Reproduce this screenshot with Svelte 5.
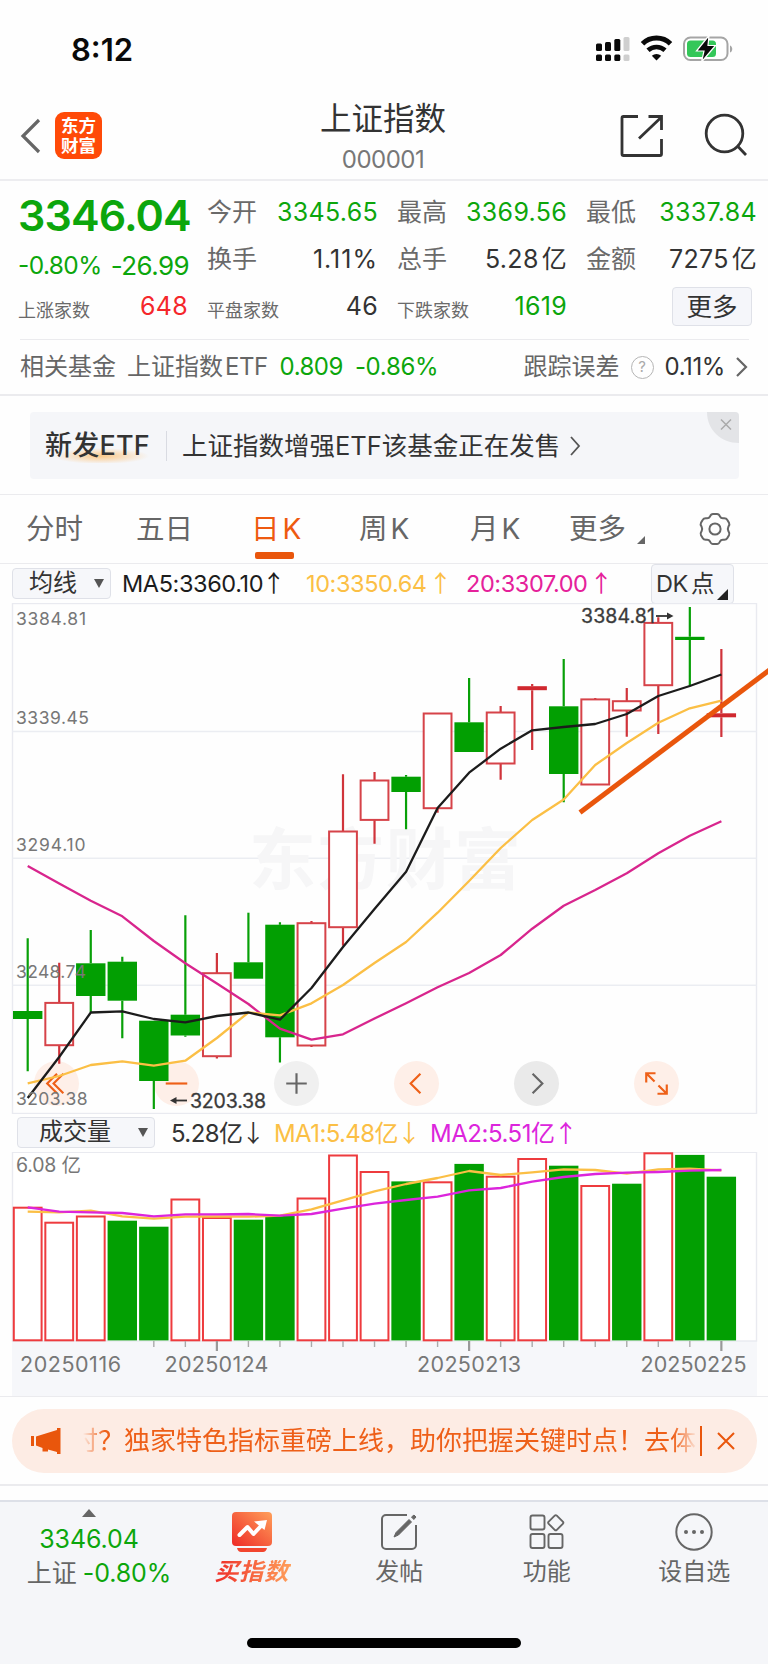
<script>
  const left = 27.7;
  const step = 31.53;
  const barWidth = 29.4;

  // up / down, high, body top, body bottom, low
  const candles = [
    ["down", 938.3, 1011, 1019, 1071.3],
    ["up", 962.7, 1002.7, 1045, 1063.7],
    ["down", 930, 963.3, 996, 1012],
    ["down", 956.7, 961.7, 1000.7, 1038.3],
    ["down", 1020.7, 1020.7, 1081, 1109],
    ["down", 915.3, 1014.7, 1035.5, 1036.7],
    ["up", 953, 973, 1056, 1058.5],
    ["down", 912.7, 962.3, 978.7, 978.7],
    ["down", 922.3, 924.7, 1037.3, 1062.5],
    ["up", 921, 923, 1045.3, 1047],
    ["up", 774.3, 831.3, 927, 945.7],
    ["up", 772, 780.3, 819.7, 843.7],
    ["down", 775, 776.7, 792, 829.3],
    ["up", 713.3, 713.3, 808, 812.7],
    ["down", 678, 722.3, 752, 752],
    ["up", 706, 712.3, 763.3, 779.7],
    ["up", 684, 686.2, 690.2, 750],
    ["down", 659, 706.3, 774, 802.3],
    ["up", 698, 699.2, 784.3, 784.3],
    ["up", 688, 701, 710.3, 736.7],
    ["up", 617.3, 622.7, 685, 734],
    ["down", 607, 636.8, 640, 686],
    ["up", 649, 713.3, 717.3, 737],
  ];

  const ma5 = [1098, 1057, 1012.5, 1011.3, 1019, 1022.3, 1016, 1012.5, 1019.7, 988, 947, 909, 871.7, 808, 772.7, 748.7, 730.3, 727, 724, 714, 696, 686, 674.5];
  const ma10 = [1083.3, 1076, 1065, 1061.3, 1065.7, 1060.7, 1038, 1012.5, 1015.3, 1003.3, 985, 963, 942, 912.7, 881, 848, 820, 799.5, 765, 743, 722.7, 708.3, 700.7];
  const ma20 = [866, 883.5, 900.7, 916.3, 941, 963.3, 983.5, 1004, 1028.7, 1039.7, 1034.3, 1018.5, 1003.3, 987.3, 973, 955, 928.7, 905.7, 890, 873.3, 853.3, 835.7, 821.3];

  const volumes = [
    ["up", 1207.7], ["up", 1222.7], ["up", 1216.5], ["down", 1221.3], ["down", 1227.3],
    ["up", 1199.5], ["up", 1218], ["down", 1220.3], ["down", 1216.5], ["up", 1198.5],
    ["up", 1155.5], ["up", 1172], ["down", 1182], ["up", 1182.3], ["down", 1164.5],
    ["up", 1176.7], ["up", 1159], ["down", 1166.3], ["up", 1186], ["down", 1184.3],
    ["up", 1153.3], ["down", 1155.5], ["down", 1177.3],
  ];
  const volMa1 = [1211.7, 1212.3, 1210.7, 1216.3, 1218.7, 1216.7, 1216.5, 1216.7, 1215.7, 1209.3, 1200.3, 1191.3, 1184, 1178, 1171, 1175, 1172.3, 1169.3, 1170, 1173.7, 1169.3, 1168.7, 1170.3];
  const volMa2 = [1207.3, 1211.7, 1212.3, 1213, 1216.3, 1214.3, 1214.3, 1214, 1215.7, 1214, 1208.7, 1203.7, 1200, 1196.7, 1190.3, 1188, 1181.7, 1177, 1174, 1172.7, 1172, 1170.7, 1170];

  const prices = [
    ["3384.81", 618.5, 70],
    ["3339.45", 718, 73],
    ["3294.10", 845, 69.5],
    ["3248.74", 972, 70],
    ["3203.38", 1099, 71.5],
  ];
  const dates = [
    ["20250116", 20, 101],
    ["20250124", 164.5, 104],
    ["20250213", 417, 104],
    ["20250225", 640.5, 106],
  ];

  const x = (i) => left + i * step;
  const line = (ys) => ys.map((y, i) => `${x(i).toFixed(1)},${y}`).join(" ");
</script>

<div class="phone">
  <div class="status">
    <span class="time">8:12</span>
    <svg class="status-icons" width="140" height="30" viewBox="595 34 140 30">
      <g fill="#0a0a0a">
        <rect x="596" y="43.5" width="6" height="7.5" rx="1.5" />
        <rect x="605" y="42" width="6" height="9" rx="1.5" />
        <rect x="614.3" y="39" width="6" height="12" rx="1.5" />
        <rect x="596" y="54.5" width="6" height="6.5" rx="1.5" />
        <rect x="605" y="54.5" width="6" height="6.5" rx="1.5" />
        <rect x="614.3" y="54.5" width="6" height="6.5" rx="1.5" />
      </g>
      <rect x="623.5" y="37" width="6" height="14" rx="1.5" fill="#cfcfcf" />
      <rect x="623.5" y="54.5" width="6" height="6.5" rx="1.5" fill="#cfcfcf" />
      <path d="M642.500 43.800a20 20 0 0 1 28 0" fill="none" stroke="#0a0a0a" stroke-width="5" />
      <path d="M648 50.300a12.500 12.500 0 0 1 17 0" fill="none" stroke="#0a0a0a" stroke-width="4.600" />
      <path d="M651.800 55.800a7 7 0 0 1 9.400 0l-4.700 4.700z" fill="#0a0a0a" />
      <rect x="684" y="37.500" width="43.500" height="22.500" rx="6.500" fill="#fff" stroke="#a5a5a5" stroke-width="2" />
      <path d="M730 45.500c3 1 3 6 0 7z" fill="#a5a5a5" />
      <rect x="687" y="40.500" width="29" height="16.500" rx="3.500" fill="#34c759" />
      <path d="M709 35.500l-12.500 15.500h7.500l-2.500 11 14-16.500h-7.500z" fill="#0a0a0a" stroke="#fff" stroke-width="1.200" />
    </svg>
  </div>

  <header>
    <div class="nav-left">
      <svg width="24" height="38" viewBox="0 0 24 38"><path d="M21 3L5 19l16 16" fill="none" stroke="#666" stroke-width="3.200" /></svg>
      <div class="logo"><span>东方</span><span>财富</span></div>
    </div>
    <div class="title">
      <h1>上证指数</h1>
      <p>000001</p>
    </div>
    <svg class="nav-right" width="130" height="46" viewBox="618 112 130 46">
      <g fill="none" stroke="#333" stroke-width="2.800">
        <path d="M638 116.500h-14.500a1.500 1.500 0 0 0-1.500 1.500v36a1.500 1.500 0 0 0 1.500 1.500h36.500a1.500 1.500 0 0 0 1.500-1.500v-15" />
        <path d="M648.500 116.500h13V130M661 117.500l-22 21" />
        <circle cx="724.500" cy="133.500" r="18.300" />
        <path d="M737 145.500l9 9.500" />
      </g>
    </svg>
  </header>

  <section class="quote">
    <div class="cell big green">3346.04</div>
    <div class="cell"><label>今开</label><b class="green">3345.65</b></div>
    <div class="cell"><label>最高</label><b class="green">3369.56</b></div>
    <div class="cell"><label>最低</label><b class="green">3337.84</b></div>

    <div class="cell change green"><span>-0.80%</span><span class="diff">-26.99</span></div>
    <div class="cell"><label>换手</label><b class="turnover">1.11%</b></div>
    <div class="cell"><label>总手</label><b>5.28<i>亿</i></b></div>
    <div class="cell"><label>金额</label><b>7275<i>亿</i></b></div>

    <div class="cell first"><small>上涨家数</small><b class="red">648</b></div>
    <div class="cell"><small>平盘家数</small><b>46</b></div>
    <div class="cell"><small>下跌家数</small><b class="green">1619</b></div>
    <div class="cell last"><button class="more">更多</button></div>
  </section>

  <section class="fund">
    <span class="grey">相关基金</span>
    <span class="grey etf">上证指数<em>ETF</em></span>
    <span class="green nav-value">0.809</span>
    <span class="green rate">-0.86%</span>
    <span class="grey error">跟踪误差</span>
    <span class="help">?</span>
    <span class="error-value">0.11%</span>
    <svg width="14" height="24" viewBox="0 0 14 24"><path d="M2 3l9 9-9 9" fill="none" stroke="#666" stroke-width="2.200" /></svg>
  </section>

  <section class="promo">
    <div class="banner">
      <strong>新发ETF</strong>
      <span class="promo-text">上证指数增强ETF该基金正在发售</span>
      <svg width="12" height="22" viewBox="0 0 12 22"><path d="M2 2l8 9-8 9" fill="none" stroke="#555" stroke-width="1.800" /></svg>
      <svg class="close" width="32" height="32" viewBox="0 0 32 32">
        <path d="M0 0h28a4 4 0 0 1 4 4v27C14 31 0 18 0 0z" fill="#e3e4e7" />
        <path d="M14 7.500l10 10M24 7.500l-10 10" stroke="#aaa" stroke-width="1.500" />
      </svg>
    </div>
  </section>

  <nav class="tabs">
    <span>分时</span>
    <span>五日</span>
    <span class="active">日<em>K</em></span>
    <span>周<em>K</em></span>
    <span>月<em>K</em></span>
    <span class="has-more">更多</span>
    <svg width="34" height="34" viewBox="0 0 34 34" fill="none" stroke="#666" stroke-width="2">
      <path d="M12 4.500Q13 2 15 2h4q2 0 3 2.500 1 2 3.500 1.700 2.700-.3 3.700 1.500l1.800 3q1 1.800-.6 4-1.200 2.300 0 4.500 1.600 2.200.6 4l-1.800 3q-1 1.800-3.700 1.500-2.500-.3-3.500 1.800-1 2.500-3 2.500h-4q-2 0-3-2.500-1-2.100-3.500-1.800-2.700.3-3.700-1.500l-1.800-3q-1-1.800.6-4 1.200-2.200 0-4.500-1.600-2.200-.6-4l1.800-3q1-1.800 3.700-1.500Q11 6.500 12 4.500z" />
      <circle cx="17" cy="17" r="5.600" />
    </svg>
  </nav>

  <div class="indicators">
    <div class="select">均线</div>
    <span class="ma m5">MA5:3360.10<u>↑</u></span>
    <span class="ma m10">10:3350.64<u>↑</u></span>
    <span class="ma m20">20:3307.00<u>↑</u></span>
    <div class="dk">DK<em>点</em></div>
  </div>

  <div class="kline">
    <div class="controls">
      <button aria-label="first"><svg viewBox="0 0 46 46"><path d="M23.500 13l-10 10 10 10M30 13L20 23l10 10" /></svg></button>
      <button aria-label="zoom out"><svg viewBox="0 0 46 46"><path d="M12 23h22" /></svg></button>
      <button class="dim" aria-label="zoom in"><svg viewBox="0 0 46 46"><path d="M12.500 23h21M23 12.500v21" /></svg></button>
      <button aria-label="previous"><svg viewBox="0 0 46 46"><path d="M27 13L17 23l10 10" /></svg></button>
      <button class="dim dark" aria-label="next"><svg viewBox="0 0 46 46"><path d="M19 13l10 10-10 10" /></svg></button>
      <button aria-label="full screen"><svg viewBox="0 0 46 46"><path d="M22 12.500h-9.500V22M13 13l8 8M24 33.500h9.500V24M33 33l-8-8" /></svg></button>
    </div>

    <svg class="chart" width="768" height="511" viewBox="0 603 768 511">
      <rect x="12.500" y="603.500" width="744" height="510" fill="none" stroke="#e9eaf0" stroke-width="1.400" />
      {#each [731.5, 858.3, 985.2] as y}
        <path d="M12.500 {y}H756.500" stroke="#ebedf2" stroke-width="1.400" />
      {/each}
      <text class="watermark" x="249" y="884" textLength="272">东方财富</text>

      {#each candles as [dir, high, top, bottom, low], i}
        <path class="wick {dir}" d="M{x(i)} {high}V{top}M{x(i)} {bottom}V{low}" />
        {#if dir === "down" || bottom - top < 5}
          <rect class="solid {dir}" x={x(i) - barWidth / 2} y={top} width={barWidth} height={bottom - top} />
        {:else}
          <rect class="hollow" x={x(i) - 13.9} y={top + 0.2} width="27.8" height={bottom - top} />
        {/if}
      {/each}

      <polyline points={line(ma20)} stroke="#d8258d" />
      <polyline points={line(ma10)} stroke="#fbbf45" />
      <polyline points={line(ma5)} stroke="#1c1c1c" />

      {#each prices as [label, y, width]}
        <text class="price" x="16" y={y + 6.3} textLength={width}>{label}</text>
      {/each}
      <path d="M580 812.500L772 668" stroke="#e9560c" stroke-width="5" />

      <g class="extreme">
        <text x="581" y="623.300" textLength="74">3384.81</text>
        <path d="M656 616h12" />
        <path class="head" d="M667 612.500l6.500 3.500-6.500 3.500z" />
        <text x="190" y="1107.800" textLength="76">3203.38</text>
        <path d="M187 1100.500h-12" />
        <path class="head" d="M176.500 1097l-6.500 3.500 6.500 3.500z" />
      </g>
    </svg>
  </div>

  <div class="indicators volume-row">
    <div class="select wide">成交量</div>
    <span class="ma v0">5.28亿<u>↓</u></span>
    <span class="ma v1">MA1:5.48亿<u>↓</u></span>
    <span class="ma v2">MA2:5.51亿<u>↑</u></span>
  </div>

  <svg class="volume" width="768" height="244" viewBox="0 1152 768 244">
    <rect x="12" y="1341" width="745" height="55" fill="#f6f7fa" />
    <rect x="12.500" y="1152.300" width="744" height="188.700" fill="#fff" stroke="#e9eaf0" stroke-width="1.400" />
    <text class="price large" x="16" y="1171.500" textLength="65">6.08 亿</text>
    {#each volumes as [dir, top], i}
      {#if dir === "up"}
        <rect class="hollow vol" x={x(i) - 13.9} y={top} width="27.8" height={1340.3 - top} />
      {:else}
        <rect class="solid down" x={x(i) - barWidth / 2} y={top - 0.6} width={barWidth} height={1341 - top} />
      {/if}
    {/each}
    <polyline points={line(volMa1)} stroke="#fbbf45" />
    <polyline points={line(volMa2)} stroke="#dc25dc" />
    {#each volumes as _, i}
      {#if i % 8 === 6}
        <path d="M{x(i)} 1341v10" stroke="#999" stroke-width="2.200" />
      {:else if i > 3}
        <path d="M{x(i)} 1341v6" stroke="#aaa" stroke-width="1.400" />
      {/if}
    {/each}
    {#each dates as [date, dx, width]}
      <text class="date" x={dx} y="1372" textLength={width}>{date}</text>
    {/each}
  </svg>

  <section class="notice">
    <div class="pill">
      <svg width="34" height="28" viewBox="0 0 34 28" fill="#e9560c">
        <path d="M1 9h3v10H1zM6 9.500L27 3V1h3.500v26H27v-2l-9-2.500v2h-5.500V21L6 18.500z" />
      </svg>
      <div class="marquee"><span>时？独家特色指标重磅上线，助你把握关键时点！去体</span></div>
      <svg class="dismiss" width="18" height="18" viewBox="0 0 18 18"><path d="M1 1l16 16M17 1L1 17" stroke="#e9560c" stroke-width="2" /></svg>
    </div>
  </section>

  <footer>
    <div class="bottom-bar">
      <div class="index">
        <svg width="14" height="8" viewBox="0 0 14 8"><path d="M0 8l7-8 7 8z" fill="#666" /></svg>
        <span class="green">3346.04</span>
        <span class="second">上证 <b class="green">-0.80%</b></span>
      </div>
      <div class="item buy">
        <svg width="42" height="42" viewBox="0 0 42 42">
          <defs>
            <linearGradient id="buy" x1="0" y1="1" x2="1" y2="0">
              <stop offset="0" stop-color="#ee2a26" />
              <stop offset="1" stop-color="#ff9f5a" />
            </linearGradient>
          </defs>
          <rect x="1" y="1" width="40" height="34" rx="4" fill="url(#buy)" />
          <path d="M6 37h30q-1 4-4 4H10q-3 0-4-4z" fill="#f2452e" />
          <path d="M8.500 24l8-8 6 7 8-8.500" fill="none" stroke="#fff" stroke-width="4" stroke-linecap="round" stroke-linejoin="round" />
          <path d="M23 10.500L36 9l-2.500 10z" fill="#fff" />
        </svg>
        <span>买指数</span>
      </div>
      <div class="item">
        <svg width="42" height="42" viewBox="0 0 42 42" fill="none" stroke="#666" stroke-width="2">
          <path d="M29 4H8a4 4 0 0 0-4 4v26a4 4 0 0 0 4 4h26a4 4 0 0 0 4-4V14" />
          <path d="M16 26l2-4.500 13-13 2.500 2.500-13 13zM33.500 6l2.500-2 2 2-2.200 2.500z" fill="#666" stroke-width="1" />
        </svg>
        <span>发帖</span>
      </div>
      <div class="item">
        <svg width="42" height="42" viewBox="0 0 42 42" fill="none" stroke="#666" stroke-width="1.900">
          <rect x="4.500" y="4.500" width="14" height="14" rx="2" />
          <rect x="4.500" y="23" width="14" height="14" rx="2" />
          <rect x="22.500" y="23" width="14" height="14" rx="2" />
          <rect x="24" y="6" width="11.500" height="11.500" rx="1.500" transform="rotate(45 29.750 11.750)" />
        </svg>
        <span>功能</span>
      </div>
      <div class="item">
        <svg width="42" height="42" viewBox="0 0 42 42" fill="none" stroke="#666" stroke-width="2">
          <circle cx="21" cy="21" r="17.700" />
          <g fill="#666" stroke="none">
            <circle cx="13" cy="21" r="2" />
            <circle cx="21" cy="21" r="2" />
            <circle cx="29" cy="21" r="2" />
          </g>
        </svg>
        <span>设自选</span>
      </div>
    </div>
    <div class="home"></div>
  </footer>
</div>

<style>
  :global(body) {
    background: #fdfdfe;
  }

  .phone {
    width: 768px;
    height: 1664px;
    overflow: hidden;
    background: #fefefe;
    color: #333;
    font-family: Inter, "Noto Sans CJK SC", sans-serif;
    font-size: 25px;
    line-height: 1;
    white-space: nowrap;
  }

  .phone * {
    box-sizing: border-box;
  }

  svg {
    display: block;
    flex: none;
  }

  b,
  i,
  em,
  u {
    font-weight: 400;
    font-style: normal;
    text-decoration: none;
  }

  button {
    padding: 0;
    border: none;
    font: inherit;
    color: inherit;
  }

  .green {
    color: #0ca60c;
  }

  .red {
    color: #f5272b;
  }

  .grey {
    color: #666;
  }

  .status {
    display: flex;
    justify-content: space-between;
    height: 90px;
    padding: 34px 33px 0 71px;
  }

  .time {
    font-size: 31px;
    font-weight: 600;
    line-height: 31px;
    color: #0a0a0a;
  }

  header {
    display: grid;
    grid-template-columns: 1fr auto 1fr;
    height: 91px;
    padding: 8px 20px 0 18px;
    border-bottom: 2px solid #ededf0;
  }

  .nav-left {
    display: flex;
    align-items: center;
    height: 75px;
    gap: 13px;
  }

  .logo {
    display: flex;
    flex-direction: column;
    align-items: center;
    justify-content: center;
    width: 47px;
    height: 47px;
    border-radius: 9px;
    background: #ff4a08;
    color: #fff;
    font-size: 17.500px;
    font-weight: 700;
    line-height: 20px;
  }

  .title {
    text-align: center;
  }

  h1 {
    margin: 4px 0 0;
    font-size: 31.500px;
    font-weight: 400;
    line-height: 34px;
  }

  p {
    margin: 12px 0 0;
    font-size: 24px;
    line-height: 24px;
    letter-spacing: -0.500px;
    color: #777;
  }

  .nav-right {
    justify-self: end;
    margin-top: 14px;
  }

  .quote {
    display: grid;
    grid-template-columns: 168px 171px 170px 171px;
    grid-template-rows: 47px 47px 47px;
    column-gap: 19px;
    width: 729px;
    height: 159px;
    margin: 0 11px 0 20px;
    padding: 8px 0 10px;
    border-bottom: 1.500px solid #ebebee;
  }

  .cell {
    display: flex;
    align-items: center;
    justify-content: space-between;
    width: 100%;
  }

  .cell label {
    color: #6a6a6a;
    font-size: 25px;
  }

  .cell b {
    letter-spacing: 0.300px;
  }

  .cell .turnover {
    letter-spacing: 1px;
  }

  .cell i {
    margin-left: 3px;
  }

  .cell small {
    margin-top: 9px;
    font-size: 18px;
    color: #6a6a6a;
  }

  .cell.big {
    padding-top: 6px;
    margin-left: -2px;
    font-size: 43px;
    font-weight: 600;
    letter-spacing: -0.900px;
  }

  .cell.change {
    margin-left: -2px;
    width: 171px;
    padding-top: 12px;
    font-size: 24.500px;
    letter-spacing: -0.600px;
  }

  .diff {
    font-size: 26px;
  }

  .cell.first {
    margin-left: -2px;
    width: 170px;
  }

  .cell.last {
    justify-content: flex-end;
    padding-right: 5px;
  }

  .more {
    width: 80px;
    height: 39px;
    border: 1.500px solid #dfe1e8;
    border-radius: 4px;
    background: #f5f6fa;
    font-size: 25.500px;
  }

  .fund {
    display: flex;
    align-items: center;
    height: 56px;
    padding: 0 19px 0 20px;
    border-bottom: 2px solid #ebebee;
    font-size: 24px;
  }

  .etf {
    margin-left: 11px;
  }

  .etf em {
    margin-left: 2px;
    letter-spacing: -0.500px;
  }

  .nav-value {
    margin-left: 12px;
    letter-spacing: -0.500px;
  }

  .rate {
    margin-left: 12px;
    letter-spacing: -0.300px;
  }

  .error {
    margin-left: auto;
  }

  .help {
    width: 23px;
    height: 23px;
    margin: 0 11px 0 11px;
    border: 1.500px solid #b5b5b5;
    border-radius: 50%;
    color: #aaa;
    font-size: 15px;
    line-height: 20px;
    text-align: center;
  }

  .error-value {
    margin-right: 10px;
    letter-spacing: -0.400px;
  }

  .promo {
    height: 99px;
    padding: 16px 29px 0 30px;
    border-bottom: 1.500px solid #ebebee;
  }

  .banner {
    position: relative;
    display: flex;
    align-items: center;
    height: 67px;
    padding-left: 15px;
    border-radius: 4px;
    background: #f5f6f9;
  }

  .banner strong {
    width: 121px;
    height: 34px;
    font-size: 27px;
    font-weight: 500;
    line-height: 34px;
    letter-spacing: 0.200px;
    background: radial-gradient(ellipse 48px 8px at 56px 27px, #fbc98a, rgba(251, 201, 138, 0)) no-repeat;
  }

  .promo-text {
    height: 30px;
    padding-left: 15px;
    margin-right: 9px;
    border-left: 1.500px solid #d9dbe2;
    font-size: 25.500px;
    line-height: 30px;
  }

  .close {
    position: absolute;
    top: 0;
    right: 0;
  }

  .tabs {
    display: flex;
    align-items: center;
    height: 69px;
    padding-left: 26px;
    border-bottom: 1.500px solid #ebebee;
    font-size: 28.500px;
    color: #666;
  }

  .tabs span {
    position: relative;
    width: 110px;
  }

  .tabs span:nth-child(2) {
    width: 115px;
  }

  .tabs span:nth-child(3) {
    width: 108px;
  }

  .tabs span:nth-child(4) {
    width: 111px;
  }

  .tabs span:nth-child(5) {
    width: 99px;
  }

  .tabs .has-more {
    width: 129px;
  }

  .tabs em {
    margin-left: 3px;
    font-size: 28px;
  }

  .tabs .active {
    color: #ee5a10;
  }

  .active::after {
    content: "";
    position: absolute;
    left: 4px;
    top: 37px;
    width: 39px;
    height: 7px;
    border-radius: 2px;
    background: #e9560c;
  }

  .has-more::after {
    content: "";
    position: absolute;
    left: 68px;
    top: 21px;
    border-left: 8px solid transparent;
    border-bottom: 8px solid #666;
  }

  .indicators {
    display: flex;
    align-items: center;
    height: 39px;
    padding-left: 12px;
    font-size: 23.500px;
  }

  .select {
    position: relative;
    width: 99px;
    height: 31px;
    padding-left: 16px;
    border: 1.500px solid #dfe1e8;
    border-radius: 4px;
    background: #f6f7fa;
    font-size: 24px;
    line-height: 28px;
  }

  .select::after {
    content: "";
    position: absolute;
    right: 6px;
    top: 10px;
    border: 5px solid transparent;
    border-top: 9px solid #555;
    border-bottom: none;
  }

  .select.wide {
    width: 138px;
    padding-left: 21px;
  }

  .ma {
    letter-spacing: -0.400px;
  }

  .ma u {
    display: inline-block;
    width: 21px;
    text-indent: -1px;
    font-family: "Noto Sans CJK SC", sans-serif;
  }

  .m5 {
    width: 184px;
    margin-left: 11px;
    color: #1c1c1c;
  }

  .m10 {
    width: 160px;
    color: #fbbf45;
  }

  .m20 {
    width: 185px;
    color: #e5219a;
  }

  .m10 u,
  .m20 u {
    text-indent: 2px;
  }

  .dk {
    position: relative;
    width: 83px;
    height: 40px;
    padding-left: 4px;
    border: 1.500px solid #dfe1e8;
    border-radius: 4px;
    background: #f6f7fa;
    line-height: 38px;
    letter-spacing: -0.400px;
  }

  .dk em {
    margin-left: 3px;
  }

  .dk::after {
    content: "";
    position: absolute;
    right: 5px;
    bottom: 3px;
    border-left: 11px solid transparent;
    border-bottom: 11px solid #222;
  }

  .volume-row {
    padding-left: 17px;
    font-size: 24px;
  }

  .volume-row .ma {
    letter-spacing: -0.600px;
  }

  .v0 {
    width: 103px;
    margin-left: 16px;
  }

  .v1 {
    width: 156px;
    color: #fbbf45;
  }

  .v2 {
    color: #dc25dc;
  }

  .volume-row .v2 {
    letter-spacing: -0.450px;
  }

  .kline {
    position: relative;
    height: 510px;
  }

  .chart {
    position: relative;
    pointer-events: none;
  }

  .watermark {
    font-size: 67px;
    font-weight: 700;
    fill: #f6f6f7;
  }

  polyline {
    fill: none;
    stroke-width: 2.300;
    stroke-linejoin: round;
  }

  .wick {
    stroke-width: 2.200;
  }

  .wick.up {
    stroke: #d0343b;
  }

  .wick.down {
    stroke: #08a008;
  }

  .solid.down {
    fill: #029f02;
  }

  .solid.up {
    fill: #d0282f;
  }

  .hollow {
    fill: #fff;
    stroke: #d64349;
    stroke-width: 2;
  }

  .hollow.vol {
    stroke: #ee3b3e;
  }

  .price {
    font-size: 17.500px;
    fill: #777;
  }

  .price.large {
    font-size: 19.500px;
  }

  .date {
    font-size: 21.500px;
    fill: #777;
  }

  .extreme text {
    font-size: 19.500px;
    fill: #3a3a3a;
    stroke: #3a3a3a;
    stroke-width: 0.300;
  }

  .extreme path {
    stroke: #333;
    stroke-width: 1.800;
  }

  .extreme .head {
    fill: #333;
    stroke: none;
  }

  /* chart buttons lie under the lower part of the candles */
  .controls {
    position: absolute;
    left: 34px;
    bottom: 7px;
    display: flex;
    gap: 75px;
  }

  .controls button {
    width: 45px;
    height: 45px;
    border-radius: 50%;
    background: #feefe8;
  }

  .controls svg {
    fill: none;
    stroke: #ee6018;
    stroke-width: 2.200;
  }

  .controls .dim {
    background: #f0f0f0;
  }

  .controls .dark {
    background: #eaeaea;
  }

  .controls .dim svg {
    stroke: #666;
  }

  .notice {
    height: 90px;
    padding: 12px 11px 0 12px;
    border-top: 1.500px solid #ebebee;
    border-bottom: 2px solid #ebebee;
  }

  .pill {
    display: flex;
    align-items: center;
    height: 64px;
    padding-left: 18px;
    border-radius: 32px;
    background: #fdece4;
  }

  .marquee {
    display: flex;
    width: 619px;
    height: 30px;
    margin-left: 19px;
    overflow: hidden;
    border-right: 2px solid #e9560c;
    color: #ee5f18;
    font-size: 26px;
    line-height: 30px;
  }

  .marquee span {
    width: 615px;
    overflow: hidden;
    text-indent: -11px;
    -webkit-mask-image: linear-gradient(90deg, transparent, #000 22px, #000 590px, transparent);
    mask-image: linear-gradient(90deg, transparent, #000 22px, #000 590px, transparent);
  }

  .dismiss {
    margin-left: 15px;
  }

  footer {
    height: 180px;
    margin-top: 14px;
    border-top: 2px solid #dde0e8;
    background: #f5f6f9;
  }

  .bottom-bar {
    display: grid;
    grid-template-columns: 178px repeat(4, 1fr);
    height: 136px;
  }

  .index,
  .item {
    display: flex;
    flex-direction: column;
    align-items: center;
  }

  .index {
    padding-top: 7px;
    font-size: 25px;
  }

  .index .green {
    margin-top: 10px;
    letter-spacing: -0.100px;
  }

  .second {
    margin: 9px 0 0 20px;
    color: #666;
    word-spacing: -1px;
  }

  .item {
    padding-top: 9px;
    color: #666;
    font-size: 24px;
  }

  .item span {
    margin-top: 7px;
  }

  .buy span {
    padding: 0 2px;
    font-weight: 700;
    font-style: italic;
    letter-spacing: 0.800px;
    background: linear-gradient(90deg, #ee2a26, #ff9f5a);
    -webkit-background-clip: text;
    background-clip: text;
    color: transparent;
  }

  .home {
    width: 274px;
    height: 10px;
    margin: 0 auto;
    border-radius: 5px;
    background: #000;
  }
</style>
